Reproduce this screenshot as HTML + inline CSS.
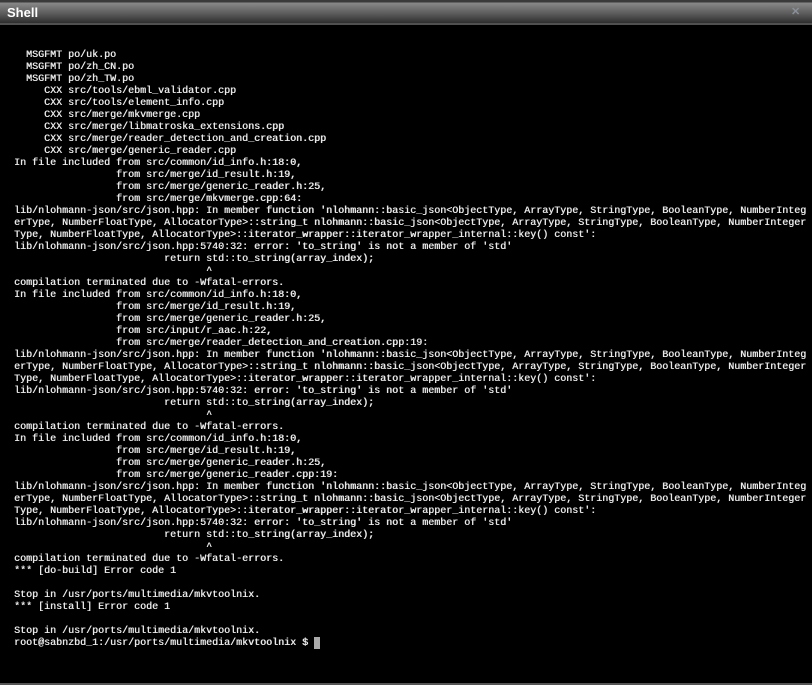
<!DOCTYPE html>
<html><head><style>
html,body{margin:0;padding:0;background:#000;width:812px;height:685px;overflow:hidden}
#title{position:absolute;left:0;top:0;width:812px;height:25px;background:linear-gradient(#3a3a3a 0,#3a3a3a 2px,#888 3px,#5a5a5a 14px,#2e2e2e 23px,#505050 23px,#505050 25px)}
#title span{position:absolute;left:7px;top:5px;font:bold 13px "Liberation Sans",sans-serif;color:#fff}
#x{position:absolute;left:791px;top:8px;width:9px;height:9px;color:#8a9098;font:bold 11px "Liberation Sans",sans-serif;line-height:9px}
pre{position:absolute;left:14px;top:50px;margin:0;font:10px/12px "Liberation Mono",monospace;color:#e8e8e8;white-space:pre;text-shadow:0.4px 0 0 #e8e8e8}
#cur{position:absolute;left:314px;top:637px;width:6px;height:12px;background:#aaa}
#bot{position:absolute;left:0;top:683px;width:812px;height:2px;background:#555}
</style></head><body>
<div id="title"><span>Shell</span><div id="x">✕</div></div>
<pre>  MSGFMT po/uk.po
  MSGFMT po/zh_CN.po
  MSGFMT po/zh_TW.po
     CXX src/tools/ebml_validator.cpp
     CXX src/tools/element_info.cpp
     CXX src/merge/mkvmerge.cpp
     CXX src/merge/libmatroska_extensions.cpp
     CXX src/merge/reader_detection_and_creation.cpp
     CXX src/merge/generic_reader.cpp
In file included from src/common/id_info.h:18:0,
                 from src/merge/id_result.h:19,
                 from src/merge/generic_reader.h:25,
                 from src/merge/mkvmerge.cpp:64:
lib/nlohmann-json/src/json.hpp: In member function 'nlohmann::basic_json&lt;ObjectType, ArrayType, StringType, BooleanType, NumberInteg
erType, NumberFloatType, AllocatorType&gt;::string_t nlohmann::basic_json&lt;ObjectType, ArrayType, StringType, BooleanType, NumberInteger
Type, NumberFloatType, AllocatorType&gt;::iterator_wrapper::iterator_wrapper_internal::key() const':
lib/nlohmann-json/src/json.hpp:5740:32: error: 'to_string' is not a member of 'std'
                         return std::to_string(array_index);
                                ^
compilation terminated due to -Wfatal-errors.
In file included from src/common/id_info.h:18:0,
                 from src/merge/id_result.h:19,
                 from src/merge/generic_reader.h:25,
                 from src/input/r_aac.h:22,
                 from src/merge/reader_detection_and_creation.cpp:19:
lib/nlohmann-json/src/json.hpp: In member function 'nlohmann::basic_json&lt;ObjectType, ArrayType, StringType, BooleanType, NumberInteg
erType, NumberFloatType, AllocatorType&gt;::string_t nlohmann::basic_json&lt;ObjectType, ArrayType, StringType, BooleanType, NumberInteger
Type, NumberFloatType, AllocatorType&gt;::iterator_wrapper::iterator_wrapper_internal::key() const':
lib/nlohmann-json/src/json.hpp:5740:32: error: 'to_string' is not a member of 'std'
                         return std::to_string(array_index);
                                ^
compilation terminated due to -Wfatal-errors.
In file included from src/common/id_info.h:18:0,
                 from src/merge/id_result.h:19,
                 from src/merge/generic_reader.h:25,
                 from src/merge/generic_reader.cpp:19:
lib/nlohmann-json/src/json.hpp: In member function 'nlohmann::basic_json&lt;ObjectType, ArrayType, StringType, BooleanType, NumberInteg
erType, NumberFloatType, AllocatorType&gt;::string_t nlohmann::basic_json&lt;ObjectType, ArrayType, StringType, BooleanType, NumberInteger
Type, NumberFloatType, AllocatorType&gt;::iterator_wrapper::iterator_wrapper_internal::key() const':
lib/nlohmann-json/src/json.hpp:5740:32: error: 'to_string' is not a member of 'std'
                         return std::to_string(array_index);
                                ^
compilation terminated due to -Wfatal-errors.
*** [do-build] Error code 1

Stop in /usr/ports/multimedia/mkvtoolnix.
*** [install] Error code 1

Stop in /usr/ports/multimedia/mkvtoolnix.
root@sabnzbd_1:/usr/ports/multimedia/mkvtoolnix $</pre>
<div id="cur"></div>
<div id="bot"></div>
</body></html>
